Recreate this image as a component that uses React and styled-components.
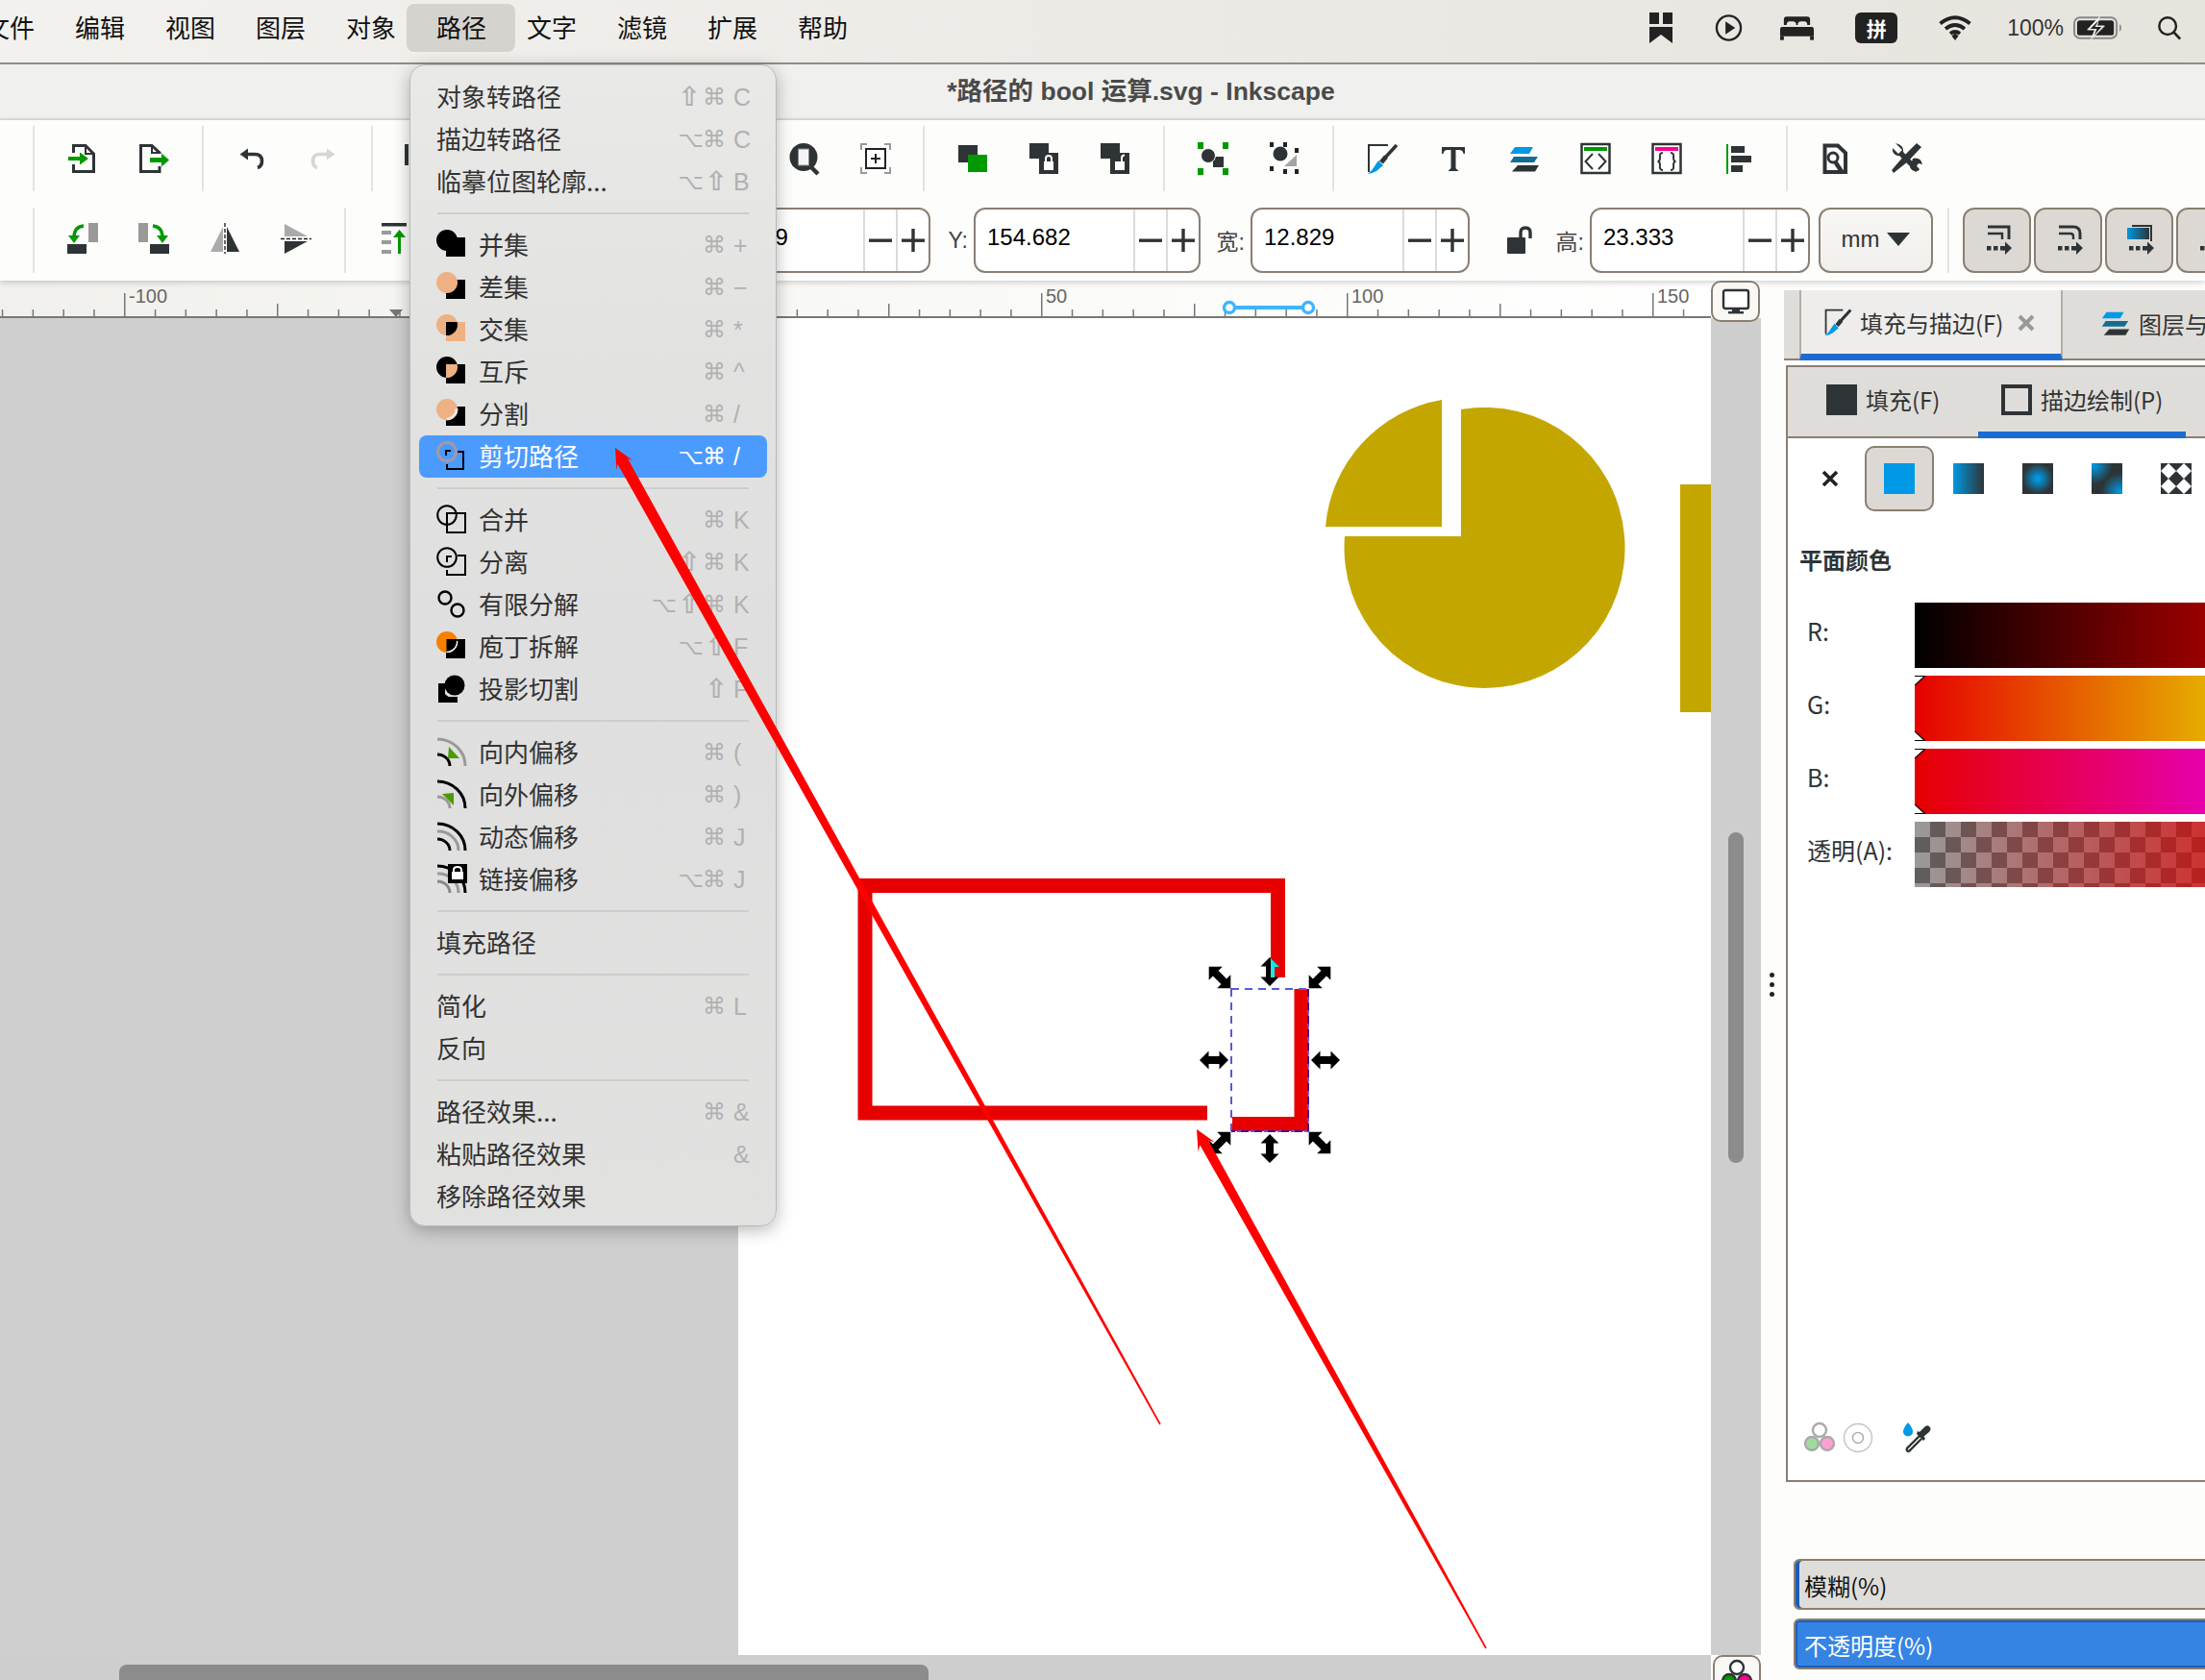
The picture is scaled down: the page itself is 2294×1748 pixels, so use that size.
import React from 'react';
import styled, { createGlobalStyle, css } from 'styled-components';

const DARK = '#2e3436';
const GREEN = '#009900';
const BLUE = '#0099e5';
const PINK = '#ff0090';
const PEACH = '#edb183';
const LINE = '#8a7f73';
const SANS = `"Liberation Sans", "Noto Sans CJK SC", sans-serif`;
const CJK = `"Noto Sans CJK SC", "Liberation Sans", sans-serif`;
const SYM = `"Liberation Sans", "DejaVu Sans", sans-serif`;

const Global = createGlobalStyle`
  html, body { margin: 0; padding: 0; background: #fff; }
  #root { width: 2294px; height: 1748px; overflow: hidden; }
`;

const Page = styled.div`
  position: relative; width: 2294px; height: 1748px; overflow: hidden;
  display: flex; flex-direction: column; font-family: ${CJK};
`;

/* ---------- menu bar ---------- */
const MenuBar = styled.div`
  flex: none; height: 65px; border-bottom: 2px solid #8f8d89; display: flex; align-items: flex-start;
  padding-left: 0; background: linear-gradient(90deg, #f2f1ee 0%, #ebe9e4 60%, #e7e4de 100%);
  position: relative; z-index: 1; isolation: isolate;
`;
const MenuItems = styled.div`display: flex; margin-left: -37px;`;
const MenuItem = styled.div`
  position: relative; width: 94px; height: 56px; line-height: 56px; text-align: center;
  font-size: 26px; color: #111;
  ${p => p.$active && css`
    &::before { content: ''; position: absolute; z-index: -1; left: -10px; right: -9px; top: 4px; bottom: 2px;
      background: #d4d3ce; border-radius: 8px; }
  `}
`;
const Tray = styled.div`margin-left: auto; display: flex; align-items: center; height: 58px; padding-right: 24px;`;
const TrayCell = styled.div`margin-left: ${p => p.$m}px; display: flex; align-items: center;`;
const ImeBox = styled.div`
  width: 44px; height: 32px; border-radius: 6px; background: #222; color: #fff; font-size: 21px; font-weight: 700;
  display: flex; align-items: center; justify-content: center;
`;
const Percent = styled.span`font: 23px ${SANS}; color: #333;`;

/* ---------- title ---------- */
const TitleBar = styled.div`
  flex: none; box-sizing: border-box; height: 58px; padding-bottom: 5px; border-bottom: 2px solid #dcdcda; background: #f0f0ee; display: flex; align-items: center;
  justify-content: center; padding-left: 80px; font: 700 26.5px ${SANS}; color: #4a4a4a;
`;

/* ---------- toolbar ---------- */
const Toolbar = styled.div`
  flex: none; height: 167px; background: #fdfdfb; box-shadow: 0 2px 6px rgba(0,0,0,.18); position: relative; z-index: 1;
  display: flex; flex-direction: column;
`;
const ToolRow = styled.div`
  flex: none; box-sizing: border-box; display: flex; align-items: center; height: ${p => p.$h}px; padding-left: 34px;
  padding-bottom: ${p => p.$bottom || 0}px;
`;
const Sep = styled.div`flex: none; width: 2px; height: 68px; background: #e4e3df; margin-left: ${p => p.$m || 0}px;`;
const Group = styled.div`
  flex: none; width: ${p => p.$w}px; display: flex; align-items: center;
  justify-content: ${p => p.$j || 'center'}; padding: ${p => p.$pad || '0'}; box-sizing: border-box;
`;
const Slot = styled.div`
  flex: none; box-sizing: border-box; width: ${p => p.$w || 74}px; height: 68px; display: flex; align-items: center; justify-content: center;
  margin-left: ${p => p.$m || 0}px; padding-bottom: ${p => p.$up || 0}px;
`;
const SlotPair = styled.span`display: flex;`;
const Spin = styled.div`
  flex: none; box-sizing: border-box; width: ${p => p.$w}px; height: 68px; margin-left: ${p => p.$m || 0}px;
  display: flex; border: 2px solid ${LINE}; border-radius: 12px; background: #fff; overflow: hidden;
`;
const SpinValue = styled.div`flex: 1; padding: 0 0 6px 12px; display: flex; align-items: center; font: 24px ${SANS}; color: #000;`;
const SpinCell = styled.div`
  flex: none; width: 34px; border-left: 2px solid #dddbd7; box-sizing: border-box;
  display: flex; align-items: center; justify-content: center;
`;
const FieldLabel = styled.div`
  flex: none; width: ${p => p.$w}px; box-sizing: border-box; padding-right: 6px; text-align: right;
  font: 23px ${SANS}; color: #444;
`;
const LockWrap = styled.span`display: flex; margin-left: 20px;`;
const UnitButton = styled.div`
  flex: none; box-sizing: border-box; width: 119px; height: 68px; margin-left: 9px; border: 2px solid ${LINE}; border-radius: 12px;
  background: linear-gradient(#f8f7f4, #f0efeb); display: flex; align-items: center; justify-content: center; gap: 8px;
  font: 24px ${SANS}; color: #333; padding-bottom: 2px;
`;
const CmdButtons = styled.div`display: flex; gap: 3px; margin-left: 14px;`;
const CmdButton = styled.div`
  flex: none; box-sizing: border-box; width: 71px; height: 68px; border: 2px solid ${LINE}; border-radius: 12px;
  background: #dcd9d4; display: flex; align-items: center; justify-content: center;
`;

/* ---------- main area ---------- */
const Main = styled.div`flex: 1; min-height: 0; display: flex;`;
const Work = styled.div`flex: none; width: 1832px; display: flex; flex-direction: column;`;
const RulerRow = styled.div`flex: none; height: 39px; display: flex;`;
const RulerStrip = styled.div`
  flex: none; width: 1780px; height: 39px; background: linear-gradient(90deg, #f1f0ec 0%, #f8f8f5 45%, #ffffff 100%);
`;
const ScreenButton = styled.div`
  flex: none; box-sizing: border-box; width: 51px; height: 43px; border: 2px solid ${LINE}; border-radius: 10px; background: #f9f8f5;
  display: flex; align-items: center; justify-content: center; position: relative; z-index: 1;
`;
const CanvasRow = styled.div`flex: 1; min-height: 0; display: flex;`;
const Desk = styled.div`flex: none; width: 768px; background: #cfcfcf;`;
const Sheet = styled.div`flex: none; width: 1012px; background: #fff; position: relative;`;
const Drawing = styled.svg`position: absolute; left: 0; top: 0;`;
const VTrack = styled.div`flex: none; width: 52px; background: #cecece; padding-top: 535px; box-sizing: border-box;`;
const VThumb = styled.div`width: 16px; height: 344px; margin-left: 18px; border-radius: 8px; background: #8c8c8c;`;
const HRow = styled.div`flex: none; height: 26px; display: flex;`;
const HTrack = styled.div`flex: none; width: 1780px; background: #cecece; padding: 10px 0 0 124px; box-sizing: border-box;`;
const HThumb = styled.div`width: 842px; height: 16px; border-radius: 8px 8px 0 0; background: #8c8c8c;`;
const CornerButton = styled.div`
  flex: none; box-sizing: border-box; width: 50px; height: 30px; margin: 0 2px; border: 2px solid ${LINE}; border-bottom: 0;
  border-radius: 10px 10px 0 0; background: #f9f8f5; display: flex; justify-content: center; align-items: flex-start; padding-top: 2px;
`;

/* ---------- right panel ---------- */
const Panel = styled.div`
  flex: none; width: 462px; background: #fdfdfb; position: relative; overflow: hidden; padding-top: 10px; box-sizing: border-box;
  display: flex; flex-direction: column;
`;
const Grip = styled.div`position: absolute; left: 9px; top: 720px; display: flex; flex-direction: column; gap: 5px;`;
const GripDot = styled.span`width: 5px; height: 5px; border-radius: 50%; background: #222;`;
const DockTabs = styled.div`
  flex: none; height: 71px; margin-left: 24px; background: #dfddd9; border-bottom: 2px solid ${LINE}; display: flex; padding-left: 16px;
  font-size: 24px; color: #333;
`;
const DockTab = styled.div`
  flex: none; box-sizing: border-box; display: flex; align-items: center; height: 73px; margin-bottom: -2px;
  width: ${p => p.$w}px; padding-left: ${p => p.$pad}px; gap: 7px; padding-bottom: ${p => p.$on ? 0 : 5}px;
  ${p => p.$on && css`
    background: #eeedeb; border-left: 2px solid #b5ada4; border-right: 2px solid #b5ada4;
    border-bottom: 7px solid #1c6bd0;
  `}
`;
const CloseMark = styled.span`margin-left: 7px; margin-top: 2px; display: flex;`;
const Notebook = styled.div`
  flex: none; box-sizing: border-box; height: 1162px; margin: 5px 0 0 26px; border: 2px solid ${LINE}; border-right: 0;
  display: flex; flex-direction: column; background: #fff;
`;
const NbTabs = styled.div`
  flex: none; box-sizing: border-box; height: 74px; background: #dfddd9; border-bottom: 2px solid ${LINE}; display: flex;
  font-size: 24px; color: #333;
`;
const NbTab = styled.div`
  flex: none; box-sizing: border-box; width: ${p => p.$w}px; height: 74px; margin-bottom: -2px; display: flex; align-items: center; gap: 9px; padding-left: ${p => p.$pad}px;
  padding-bottom: ${p => p.$on ? 0 : 7}px;
  ${p => p.$on && css`border-bottom: 7px solid #1c6bd0;`}
`;
const Swatch = styled.span`
  flex: none; box-sizing: border-box; width: 32px; height: 32px; background: ${p => p.$hollow ? 'transparent' : DARK};
  border: ${p => p.$hollow ? `4px solid ${DARK}` : '0'};
`;
const PaintRow = styled.div`flex: none; display: flex; height: 68px; margin-top: 8px; padding-left: 8px;`;
const PaintSlot = styled.div`
  flex: none; box-sizing: border-box; width: 72px; display: flex; align-items: center; justify-content: center;
  ${p => p.$on && css`background: #dcd9d4; border: 2px solid ${LINE}; border-radius: 10px;`}
`;
const PaintSwatch = styled.span`flex: none; width: 32px; height: 32px; background: ${p => p.$bg};`;
const Heading = styled.div`flex: none; height: 30px; line-height: 30px; margin: 35px 0 30px 12px; font-size: 24px; font-weight: 700; color: ${DARK};`;
const Channels = styled.div`flex: none; display: flex; flex-direction: column; gap: 8px;`;
const Channel = styled.div`flex: none; height: 68px; display: flex; align-items: center;`;
const ChannelLabel = styled.div`flex: none; box-sizing: border-box; width: 132px; padding: 0 0 10px 20px; font-size: 25px; color: ${DARK}; font-family: ${CJK};`;
const ChannelBar = styled.div`
  flex: none; position: relative; width: 448px; height: 100%; background: ${p => p.$bg};
  ${p => p.$checker && css`background-size: 100% 100%, 32px 32px;`}
`;
const ThumbMarks = styled.svg`position: absolute; left: 0; top: 0;`;
const ToolFoot = styled.div`margin-top: auto; flex: none; height: 30px; padding: 0 0 29px 16px; display: flex; align-items: center;`;
const FootIcon = styled.span`display: flex; margin-left: ${p => p.$m || 0}px;`;
const Levels = styled.div`flex: none; margin: 80px -20px 0 34px; display: flex; flex-direction: column; gap: 9px;`;
const Level = styled.div`
  box-sizing: border-box; height: 53px; border: 2px solid ${LINE}; border-radius: 6px 0 0 6px; display: flex; align-items: center;
  font-size: 24px; padding: 2px 0 0 9px;
  ${p => p.$on
    ? css`background: #3584e4; color: #fff; box-shadow: inset 0 0 0 2px #1c5fb8;`
    : css`background: #dfddd9; color: #111; box-shadow: inset 4px 0 0 #1c5fb8;`}
`;

/* ---------- path menu ---------- */
const Menu = styled.div`
  position: absolute; left: 426px; top: 67px; width: 382px; height: 1209px; box-sizing: border-box; padding-top: 11px; z-index: 5;
  border-radius: 16px; border: 1px solid #b9b9b8; background: linear-gradient(180deg, #e9e9e7 0%, #e2e2e1 25%, #dfdfdf 50%, #e1e1e0 100%);
  box-shadow: 0 4px 18px rgba(0,0,0,.28);
`;
const Row = styled.div`
  height: 44px; margin: 0 9px; padding: 0 18px; box-sizing: border-box; display: flex; align-items: center; border-radius: 8px;
  font-size: 26px; color: ${p => p.$hot ? '#fff' : '#333'}; background: ${p => p.$hot ? '#4b9bff' : 'transparent'};
`;
const RowIcon = styled.span`flex: none; width: 32px; height: 32px; margin-right: 12px; display: flex;`;
const RowLabel = styled.span`flex: 1; white-space: nowrap; padding-bottom: 4px;`;
const Shortcut = styled.span`flex: none; display: flex; align-items: center; color: ${p => p.$hot ? '#fff' : '#b1b1b1'};`;
const Mods = styled.span`display: flex; margin-right: 8px;`;
const Mod = styled.span`
  flex: none; width: 28px; text-align: right; line-height: 30px;
  font-family: "DejaVu Sans", sans-serif; font-size: 24px;
  ${p => p.$kind === '⇧' && css`font-size: 28px; font-weight: 700; transform: translateX(2px);`}
  ${p => p.$kind === '⌥' && css`font-size: 23px; transform: translateX(5px);`}
`;
const Key = styled.span`flex: none; width: 17px; font: 25px ${SYM}; white-space: nowrap;`;
const MenuSep = styled.div`height: 2px; margin: 10px 28px; background: #cdcdcc;`;
const Overlay = styled.svg`position: absolute; left: 0; top: 0; z-index: 9; pointer-events: none;`;

/* ---------- icons ---------- */
const Ic = ({ s = 36, v = 36, children }) => <svg width={s} height={s} viewBox={`0 0 ${v} ${v}`}>{children}</svg>;

const ImportIc = () => <Ic><path d="M8.5 12V4.5H21L29.5 13V31.5H8.5V24" fill="none" stroke={DARK} strokeWidth="3"/><path d="M21 3.5V13H30" fill="none" stroke={DARK} strokeWidth="2"/><path d="M3 16H15V11.5L24 18L15 24.5V20H3Z" fill={GREEN}/></Ic>;
const ExportIc = () => <Ic><path d="M24 13V12L16 4.5H4.5V31.5H24V26" fill="none" stroke={DARK} strokeWidth="3"/><path d="M16 3.5V12H25" fill="none" stroke={DARK} strokeWidth="2"/><path d="M14 17H26V12.5L34 19.5L26 26.5V22H14Z" fill={GREEN}/></Ic>;
const UndoIc = ({ c = DARK, flip }) => <Ic><g transform={flip ? 'translate(36 0) scale(-1 1)' : ''}><path d="M14 7.5V19.5L5.5 13.5Z" fill={c}/><path d="M12 13.5H21Q28.5 13.5 28.5 20.5Q28.5 26 24 27.5" fill="none" stroke={c} strokeWidth="3.6"/></g></Ic>;
const ZoomIc = () => <Ic><circle cx="17" cy="16.5" r="14.5" fill={DARK}/><rect x="11.5" y="8" width="11" height="17" fill="#f5f5f5" stroke="#888" strokeWidth="1"/><path d="M24 26L32 34" stroke={DARK} strokeWidth="4.4"/></Ic>;
const FitIc = () => <Ic><path d="M3 9V3H9M27 3H33V9M33 27V33H27M9 33H3V27" fill="none" stroke="#999" strokeWidth="2"/><rect x="8" y="8" width="20" height="20" fill="#fff" stroke="#222" strokeWidth="2"/><path d="M18 13V23M13 18H23" stroke="#222" strokeWidth="2"/></Ic>;
const RaiseIc = () => <Ic><rect x="3" y="4" width="20" height="18" fill={DARK}/><rect x="13" y="14" width="20" height="18" fill={GREEN}/></Ic>;
const LockIc = ({ open }) => <Ic><rect x="3" y="2" width="20" height="16" fill={DARK}/><rect x="13" y="12" width="20" height="22" fill={DARK}/><rect x="18" y="21" width="10" height="9" fill="#fff"/>{open ? <path d="M25 21V17Q25 14.5 28 14.5" fill="none" stroke="#fff" strokeWidth="2"/> : <path d="M20 21V18Q20 15 23 15Q26 15 26 18V21" fill="none" stroke="#fff" strokeWidth="2"/>}</Ic>;
const GroupIc = () => <Ic><g fill={GREEN}><rect x="2" y="1" width="6" height="7"/><rect x="28" y="1" width="6" height="7"/><rect x="2" y="28" width="6" height="7"/><rect x="28" y="28" width="6" height="7"/></g><rect x="18" y="16" width="11" height="11" fill={DARK}/><circle cx="13" cy="15" r="7.5" fill={DARK} stroke="#fdfdfb" strokeWidth="1"/></Ic>;
const UngroupIc = () => <Ic><g fill="#222"><rect x="3" y="1" width="4" height="5"/><rect x="17" y="1" width="4" height="5"/><rect x="29" y="7" width="4" height="5"/><rect x="3" y="26" width="4" height="5"/><rect x="17" y="29" width="4" height="5"/><rect x="29" y="29" width="4" height="5"/></g><path d="M31 14V26H18Z" fill="#a4a4a4"/><circle cx="14" cy="13" r="7.5" fill={DARK}/></Ic>;
const BrushIc = ({ s = 36 }) => <Ic s={s}><path d="M4 32V4H24" fill="none" stroke={DARK} strokeWidth="2"/><path d="M33 4L21 17" stroke={DARK} strokeWidth="3.4"/><path d="M22 16L17 22" stroke={DARK} strokeWidth="5"/><path d="M14 20L19 25L12 31Q7 34 3 34Q8 30 10 26Z" fill={BLUE}/></Ic>;
const TextIc = () => <Ic><path d="M6 6H30V13H28.5Q28 9 24 9H20.5V28L23.5 31H12.5L15.5 28V9H12Q8 9 7.5 13H6Z" fill={DARK}/></Ic>;
const LayersIc = ({ s = 36 }) => <Ic s={s}><path d="M8 6H27L23 13H3Z" fill={BLUE}/><path d="M7 16H32L28 22H3Z" fill="#146d92"/><path d="M11 25H33L29 31.5H5Z" fill={DARK}/></Ic>;
const XmlIc = () => <Ic><rect x="3.5" y="3" width="29" height="30" fill="#fff" stroke={DARK} strokeWidth="2.5"/><rect x="6" y="6" width="24" height="4" fill={GREEN}/><path d="M15 13L7.5 21L15 29M21 13L28.5 21L21 29" fill="none" stroke={DARK} strokeWidth="2"/></Ic>;
const CssIc = () => <Ic><rect x="3.5" y="3" width="29" height="30" fill="#fff" stroke={DARK} strokeWidth="2.5"/><rect x="6" y="6" width="24" height="4" fill={PINK}/><path d="M14 12Q10 12 11 17Q11 21 8.5 21Q11 21 11 25Q10 30 14 30M22 12Q26 12 25 17Q25 21 27.5 21Q25 21 25 25Q26 30 22 30" fill="none" stroke={DARK} strokeWidth="2"/></Ic>;
const AlignIc = () => <Ic><rect x="6" y="3" width="2" height="31" fill={GREEN}/><rect x="11" y="5" width="14" height="7" fill={DARK}/><rect x="11" y="15" width="21" height="7" fill={DARK}/><rect x="11" y="25" width="12" height="7" fill={DARK}/></Ic>;
const DocToolIc = () => <Ic><path d="M6.5 32V4.5H20L28 12V32Z" fill="none" stroke={DARK} strokeWidth="4"/><circle cx="15" cy="17" r="5" fill="none" stroke={DARK} strokeWidth="3"/><path d="M17 21L25 33" stroke={DARK} strokeWidth="4.5"/></Ic>;
const ToolsIc = () => <Ic><path d="M6 2L13 9L9 13L3 7Q2 13 8 15L10 15L27 32L31 29L14 11Q15 4 6 2Z" fill={DARK}/><path d="M28 2L33 6L19 21L4 33L2 30L15 15Z" fill={DARK}/><path d="M24 18Q32 16 34 24L30 23L27 27L31 30Q24 33 21 27Z" fill={DARK}/></Ic>;
const MoveIc = ({ mirror }) => <Ic><g transform={mirror ? 'translate(36 0) scale(-1 1)' : ''}><rect x="24" y="2" width="10" height="20" fill="#999"/><rect x="2" y="24" width="20" height="10" fill={DARK}/><path d="M19 5Q9 6 9 17" fill="none" stroke={GREEN} strokeWidth="3.4"/><path d="M3 15H15L9 23Z" fill={GREEN}/></g></Ic>;
const FlipHIc = () => <Ic><path d="M16 6V32H3Z" fill="#aaa"/><path d="M20 6V32H33Z" fill={DARK}/><path d="M18 2V34" stroke="#222" strokeWidth="1.4" strokeDasharray="4 2"/></Ic>;
const FlipVIc = () => <Ic><path d="M6 3L30 16H6Z" fill="#aaa"/><path d="M6 21L30 21L6 34Z" fill={DARK}/><path d="M2 18.5H34" stroke="#222" strokeWidth="1.6" strokeDasharray="4 2"/></Ic>;
const AlignTopIc = () => <Ic><rect x="6" y="2" width="26" height="3.5" fill={DARK}/><rect x="6" y="10" width="10" height="4" fill="#999"/><rect x="6" y="20" width="10" height="4" fill="#999"/><rect x="6" y="30" width="10" height="4" fill="#999"/><rect x="23" y="14" width="3" height="20" fill={GREEN}/><path d="M18 17L24.5 9L31 17Z" fill={GREEN}/></Ic>;
const CutBarIc = () => <svg width="4" height="22" style={{ display: 'block' }}><rect width="4" height="22" fill={DARK}/></svg>;
const MinusIc = () => <svg width="26" height="26" viewBox="0 0 26 26"><rect x="1" y="11.5" width="24" height="3.4" fill={DARK}/></svg>;
const PlusIc = () => <svg width="26" height="26" viewBox="0 0 26 26"><rect x="1" y="11.5" width="24" height="3.4" fill={DARK}/><rect x="11.3" y="1" width="3.4" height="24" fill={DARK}/></svg>;
const OpenLockIc = () => <svg width="28" height="30" viewBox="0 0 28 30"><rect x="1" y="12" width="19" height="17" rx="1" fill={DARK}/><path d="M15 12V7Q15 2 20 2Q25 2 25 7V13" fill="none" stroke={DARK} strokeWidth="3.4"/></svg>;
const CmdIc = ({ round, grad, blue }) => (
  <Ic>
    {grad && <defs><linearGradient id="cg"><stop offset="0" stopColor={BLUE}/><stop offset="1" stopColor={DARK}/></linearGradient></defs>}
    {grad ? <><rect x="5" y="5" width="23" height="12" fill="url(#cg)"/><path d="M10 3H30V19" fill="none" stroke={DARK} strokeWidth="2"/></>
      : blue ? <path d="M14 4L22 10L14 16" fill="none" stroke={BLUE} strokeWidth="2"/>
      : round ? <><path d="M8 4H23Q30 4 30 11V17" fill="none" stroke={DARK} strokeWidth="3"/><path d="M8 11H20Q23 11 23 14V17" fill="none" stroke={DARK} strokeWidth="2.4"/></>
      : <><path d="M8 4H30V17" fill="none" stroke={DARK} strokeWidth="3"/><path d="M8 11H23V17" fill="none" stroke={DARK} strokeWidth="2.4"/></>}
    <g fill={DARK}><rect x="7" y="24" width="4.5" height="4.5"/><rect x="14" y="24" width="4.5" height="4.5"/><rect x="21" y="24" width="4" height="4.5"/><path d="M24 24H26V19.5L33 26L26 33V28.5H24Z"/></g>
  </Ic>
);
const ScreenIc = () => <svg width="32" height="32" viewBox="0 0 32 32"><rect x="3" y="4" width="26" height="19" rx="2" fill="#fff" stroke={DARK} strokeWidth="2.4"/><rect x="12" y="23" width="8" height="3" fill={DARK}/><rect x="8" y="26" width="16" height="2.4" fill={DARK}/></svg>;
const ColorsIc = ({ soft }) => (
  <svg width="34" height="34" viewBox="0 0 34 34" style={{ display: 'block' }}>
    <circle cx="17" cy="9" r="7" fill="#fff" stroke={soft ? '#aaa' : DARK} strokeWidth="2.4"/>
    <circle cx="9" cy="23" r="7" fill={soft ? '#9edc9e' : GREEN} stroke={soft ? '#aaa' : DARK} strokeWidth="2.4"/>
    <circle cx="25" cy="23" r="7" fill={soft ? '#ff9fd2' : PINK} stroke={soft ? '#aaa' : DARK} strokeWidth="2.4"/>
  </svg>
);
const RingIc = () => <svg width="32" height="32" viewBox="0 0 32 32"><circle cx="16" cy="16" r="14.5" fill="none" stroke="#c4c4c4" strokeWidth="1.4"/><circle cx="16" cy="16" r="5.5" fill="none" stroke="#aaa" strokeWidth="1.4"/></svg>;
const DropperIc = () => <svg width="32" height="32" viewBox="0 0 32 32"><path d="M6 0Q11 6 11 9.5A5 5 0 0 1 1 9.5Q1 6 6 0Z" fill={BLUE}/><path d="M18 14L5 27Q4 30 7 30L20 17" fill="none" stroke={DARK} strokeWidth="2.4"/><path d="M15 12L22 19L24 17L22.5 14.5L28 10Q31 6 28 4Q25 2 22 6L18 10L16 9Z" fill={DARK}/></svg>;
const XIc = ({ c = '#222', s = 20, w = 3.6 }) => <svg width={s} height={s} viewBox="0 0 20 20"><path d="M3 3L17 17M17 3L3 17" stroke={c} strokeWidth={w}/></svg>;
const CaretIc = () => <svg width="24" height="16" viewBox="0 0 24 16"><path d="M0 1H24L12 15Z" fill={DARK}/></svg>;
const PatternIc = () => <svg width="32" height="32" viewBox="0 0 32 32" style={{ display: 'block' }}><rect width="32" height="32" fill="#fff"/><path d="M0 0H8L0 8ZM16 0H24L16 8L8 0ZM32 0V8L24 0ZM16 8L24 16L16 24L8 16ZM0 8L8 16L0 24ZM32 8V24L24 16ZM0 24L8 32H0ZM16 24L24 32H8ZM32 24V32H24Z" fill={DARK}/></svg>;

/* tray */
const BookmarkIc = () => <svg width="24" height="32" viewBox="0 0 24 32" style={{ display: 'block' }}><path d="M0 0H10V12H0ZM14 0H24V12H14ZM0 15H24V32L12 23L0 32Z" fill="#222"/></svg>;
const PlayIc = () => <svg width="29" height="30" viewBox="0 0 30 30"><circle cx="15" cy="15" r="13" fill="none" stroke="#222" strokeWidth="2.4"/><path d="M11.5 8L22 15L11.5 22Z" fill="#222"/></svg>;
const BedIc = () => <svg width="37" height="26" viewBox="0 0 38 26"><path d="M5 10V4Q5 1 8 1H30Q33 1 33 4V10H30Q30 6 27 6H23Q21 6 20 8V10H18V8Q17 6 15 6H11Q8 6 8 10Z" fill="#222"/><path d="M3 12H35Q37 12 37 15V22H1V15Q1 12 3 12Z" fill="#222"/><rect x="1" y="22" width="4" height="4" fill="#222"/><rect x="33" y="22" width="4" height="4" fill="#222"/></svg>;
const WifiIc = () => <svg width="36" height="28" viewBox="0 0 36 28"><path d="M2.5 9.5Q18 -3 33.5 9.5M8 15Q18 7 28 15M13 20Q18 16 23 20" fill="none" stroke="#222" strokeWidth="3.8"/><path d="M14.5 22.5L18 19.5L21.5 22.5L18 27Z" fill="#222"/></svg>;
const BatteryIc = () => <svg width="51" height="26" viewBox="0 0 52 26"><rect x="1" y="2" width="45" height="22" rx="6" fill="none" stroke="#888" strokeWidth="2"/><rect x="4" y="5" width="39" height="16" rx="3" fill="#222"/><path d="M49 9Q51 10 51 13Q51 16 49 17Z" fill="#888"/><path d="M28 1L15 15H23L19 25L33 11H25Z" fill="#fff" stroke="#e9e6e0" strokeWidth="1"/><path d="M27 5L18 14H25L22 21L30 12H23Z" fill="#222"/></svg>;
const SearchIc = () => <svg width="26" height="28" viewBox="0 0 28 28"><circle cx="12" cy="12" r="9.5" fill="none" stroke="#222" strokeWidth="2.6"/><path d="M19 19L26 26.5" stroke="#222" strokeWidth="3"/></svg>;

/* menu icons */
const MI = ({ children }) => <svg width="32" height="32" viewBox="0 0 32 32">{children}</svg>;
const ci = { cx: 11, cy: 11, r: 11 };
const sq = { x: 10, y: 8, width: 20, height: 20 };
const OUT = 'M1 2A29 28 0 0 1 30 30';
const MID = 'M1 10A21 20 0 0 1 23 30';
const INN = 'M1 18A13 12 0 0 1 14 30';
const menuIcons = {
  union: <MI><circle {...ci} fill="#000"/><rect {...sq} fill="#000"/></MI>,
  diff: <MI><rect {...sq} fill="#000"/><circle {...ci} fill={PEACH}/></MI>,
  inter: <MI><circle {...ci} fill={PEACH}/><rect {...sq} fill={PEACH}/><path d="M10 8H21.6A11 11 0 0 1 10 21.95Z" fill="#000"/></MI>,
  xor: <MI><circle {...ci} fill="#000"/><rect {...sq} fill="#000"/><path d="M10 8H21.6A11 11 0 0 1 10 21.95Z" fill={PEACH}/></MI>,
  cut: <MI><rect {...sq} fill="#000"/><circle {...ci} fill={PEACH}/><path d="M21 10A10.5 10.5 0 0 1 10.5 21" fill="none" stroke="#e6e6e5" strokeWidth="3"/></MI>,
  clip: <MI><path d="M15 11H28V29H11V24" fill="none" stroke="#000" strokeWidth="2"/><circle cx="11" cy="11" r="9.5" fill="#4b9bff" stroke="#a897a2" strokeWidth="3"/><path d="M10 15V10H15" fill="none" stroke="#000" strokeWidth="2"/></MI>,
  merge: <MI><rect x="11" y="9" width="19" height="20" fill="none" stroke="#000" strokeWidth="2"/><circle cx="11" cy="11" r="9.8" fill="none" stroke="#000" strokeWidth="2"/></MI>,
  sep: <MI><path d="M22 9H30V29H11V24" fill="none" stroke="#000" strokeWidth="2"/><circle cx="11" cy="11" r="9.8" fill="none" stroke="#000" strokeWidth="2"/><path d="M11 16V10H16" fill="none" stroke="#000" strokeWidth="2"/></MI>,
  frag: <MI><circle cx="9" cy="9" r="6.5" fill="none" stroke="#000" strokeWidth="2.4"/><circle cx="22" cy="22" r="6.5" fill="none" stroke="#000" strokeWidth="2.4"/></MI>,
  slice: <MI><rect {...sq} fill="#000"/><circle {...ci} fill="#f77f00"/><path d="M10.5 8H21.5A11 11 0 0 1 10.5 21.5Z" fill="#000"/><path d="M21.6 10A11 11 0 0 1 10.5 21.5" fill="none" stroke="#f4f4f4" strokeWidth="1.5"/></MI>,
  proj: <MI><rect x="2" y="10" width="20" height="20" fill="#000"/><circle cx="19" cy="12" r="13.5" fill="#e0e0e0"/><path d="M2 10H9V24H22V30H2Z" fill="#000"/><circle cx="19" cy="12" r="10.5" fill="#000"/></MI>,
  inset: <MI><path d={OUT} fill="none" stroke="#999" strokeWidth="3"/><path d={INN} fill="none" stroke="#000" strokeWidth="3"/><path d="M13 10L24 22H12Z" fill="#4e9a06"/></MI>,
  outset: <MI><path d={INN} fill="none" stroke="#999" strokeWidth="3"/><path d={OUT} fill="none" stroke="#000" strokeWidth="3"/><path d="M6 15L18 14V27Z" fill="#4e9a06"/></MI>,
  dyn: <MI><path d={OUT} fill="none" stroke="#000" strokeWidth="3"/><path d={MID} fill="none" stroke="#999" strokeWidth="3"/><path d={INN} fill="none" stroke="#000" strokeWidth="3"/></MI>,
  link: <MI><path d={OUT} fill="none" stroke="#000" strokeWidth="3"/><path d={MID} fill="none" stroke="#999" strokeWidth="3"/><path d={INN} fill="none" stroke="#888" strokeWidth="3"/><rect x="12" y="0" width="20" height="20" fill="#000"/><rect x="16" y="8" width="12" height="8" fill="#fff"/><path d="M18 9V6Q18 3 22 3Q26 3 26 6V9" fill="none" stroke="#fff" strokeWidth="2"/></MI>,
};

const menuData = [
  [['对象转路径', null, '⇧⌘', 'C'], ['描边转路径', null, '⌥⌘', 'C'], ['临摹位图轮廓...', null, '⌥⇧', 'B']],
  [['并集', 'union', '⌘', '+'], ['差集', 'diff', '⌘', '−'], ['交集', 'inter', '⌘', '*'], ['互斥', 'xor', '⌘', '^'], ['分割', 'cut', '⌘', '/'], ['剪切路径', 'clip', '⌥⌘', '/', true]],
  [['合并', 'merge', '⌘', 'K'], ['分离', 'sep', '⇧⌘', 'K'], ['有限分解', 'frag', '⌥⇧⌘', 'K'], ['庖丁拆解', 'slice', '⌥⇧', 'F'], ['投影切割', 'proj', '⇧', 'F']],
  [['向内偏移', 'inset', '⌘', '('], ['向外偏移', 'outset', '⌘', ')'], ['动态偏移', 'dyn', '⌘', 'J'], ['链接偏移', 'link', '⌥⌘', 'J']],
  [['填充路径']],
  [['简化', null, '⌘', 'L'], ['反向']],
  [['路径效果...', null, '⌘', '&'], ['粘贴路径效果', null, '', '&'], ['移除路径效果']],
];

const PathMenu = () => (
  <Menu>
    {menuData.map((sec, i) => (
      <React.Fragment key={i}>
        {i > 0 && <MenuSep />}
        {sec.map(([label, icon, mods, key, hot]) => (
          <Row key={label} $hot={hot}>
            {icon && <RowIcon>{menuIcons[icon]}</RowIcon>}
            <RowLabel>{label}</RowLabel>
            {key && (
              <Shortcut $hot={hot}>
                <Mods>{[...mods].map(c => <Mod key={c} $kind={c}>{c}</Mod>)}</Mods>
                <Key>{key}</Key>
              </Shortcut>
            )}
          </Row>
        ))}
      </React.Fragment>
    ))}
  </Menu>
);

/* ruler */
const Ruler = () => {
  const ticks = [];
  for (let k = -34; k <= 22; k++) {
    const x = 1083 + 31.8 * k;
    const h = k % 10 === 0 ? 25 : k % 5 === 0 ? 14 : 8;
    ticks.push(<rect key={k} x={x} y={38 - h} width="1.5" height={h} fill="#777"/>);
    if (k % 10 === 0) ticks.push(<text key={`t${k}`} x={x + 5} y="23" fontFamily="Liberation Sans" fontSize="20" fill="#666">{50 + k * 5}</text>);
  }
  return (
    <svg width="1780" height="39" viewBox="0 0 1780 39" style={{ display: 'block' }}>
      {ticks}
      <rect x="0" y="37" width="1780" height="2" fill="#777"/>
      <path d="M405 30H419L412 38Z" fill="#777"/>
      <path d="M1279 28H1361" stroke="#3db5ff" strokeWidth="4"/>
      <circle cx="1279" cy="28" r="5.5" fill="#fff" stroke="#3db5ff" strokeWidth="3.4"/>
      <circle cx="1361" cy="28" r="5.5" fill="#fff" stroke="#3db5ff" strokeWidth="3.4"/>
    </svg>
  );
};

/* drawing on the page */
const Handle = ({ x, y, rot = 0, long }) => {
  const L = long ? 16 : 15;
  const H = long ? 10 : 9.5;
  const pts = `0,${-L} ${H},${-L + H} 4,${-L + H} 4,${L - H} ${H},${L - H} 0,${L} ${-H},${L - H} -4,${L - H} -4,${-L + H} ${-H},${-L + H}`;
  return <polygon points={pts} fill="#000" transform={`translate(${x} ${y}) rotate(${rot})`}/>;
};

const CanvasArt = () => (
  <Drawing width="1012" height="1391" viewBox="768 331 1012 1391">
    <path d="M1500 416A146 146 0 0 0 1379 548H1500Z" fill="#c4a600"/>
    <path d="M1520 426A146 146 0 1 1 1399 558H1520Z" fill="#c4a600"/>
    <rect x="1748" y="504" width="32" height="237" fill="#c4a600"/>
    <path d="M1256 1158H900V921.5H1329.5V1017" fill="none" stroke="#e60000" strokeWidth="15"/>
    <path d="M1282 1169.5H1354V1029" fill="none" stroke="#e60000" strokeWidth="15"/>
    <rect x="1281" y="1029" width="80" height="148" fill="none" stroke="#5a5ada" strokeWidth="2" strokeDasharray="8 6"/>
    <path d="M1361 1029V1177H1281" fill="none" stroke="#4a0a90" strokeWidth="2" strokeDasharray="8 6"/>
    <Handle x={1321} y={1011}/>
    <Handle x={1321} y={1195}/>
    <Handle x={1263} y={1103} rot={90}/>
    <Handle x={1379} y={1103} rot={90}/>
    <Handle x={1269} y={1017} rot={-45} long/>
    <Handle x={1373} y={1017} rot={45} long/>
    <Handle x={1269} y={1189} rot={45} long/>
    <Handle x={1373} y={1189} rot={-45} long/>
    <path d="M1322 997L1331 1006H1326V1017H1322Z" fill="#19e6e6"/>
  </Drawing>
);

const arrowPath = ([tx, ty], [ex, ey], w) => {
  const d = Math.hypot(ex - tx, ey - ty);
  const ux = (ex - tx) / d, uy = (ey - ty) / d;
  const nx = -uy, ny = ux;
  const p = (a, b) => `${(tx + ux * a + nx * b).toFixed(1)},${(ty + uy * a + ny * b).toFixed(1)}`;
  return [p(0, 0), p(21, 10), p(16, w / 2), p(d, 0.8), p(d, -0.8), p(16, -w / 2), p(21, -10)].join(' ');
};

const Marks = () => (
  <ThumbMarks width="12" height="68" viewBox="0 0 12 68">
    <path d="M0 0H11L0 10Z" fill="#fff"/><path d="M0 10L11 0" stroke="#000" strokeWidth="1.2"/><path d="M0 .5H11" stroke="#000" strokeWidth="1"/>
    <path d="M0 68H11L0 58Z" fill="#fff"/><path d="M0 58L11 68" stroke="#000" strokeWidth="1.2"/><path d="M0 67.5H11" stroke="#000" strokeWidth="1"/>
  </ThumbMarks>
);

const App = () => (
  <Page>
    <Global />
    <MenuBar>
      <MenuItems>
        {['文件', '编辑', '视图', '图层', '对象', '路径', '文字', '滤镜', '扩展', '帮助'].map(m => (
          <MenuItem key={m} $active={m === '路径'}>{m}</MenuItem>
        ))}
      </MenuItems>
      <Tray>
        <TrayCell $m={0}><BookmarkIc /></TrayCell>
        <TrayCell $m={44}><PlayIc /></TrayCell>
        <TrayCell $m={38}><BedIc /></TrayCell>
        <TrayCell $m={42}><ImeBox>拼</ImeBox></TrayCell>
        <TrayCell $m={42}><WifiIc /></TrayCell>
        <TrayCell $m={36}><Percent>100%</Percent></TrayCell>
        <TrayCell $m={10}><BatteryIc /></TrayCell>
        <TrayCell $m={36}><SearchIc /></TrayCell>
      </Tray>
    </MenuBar>
    <TitleBar>*路径的 bool 运算.svg - Inkscape</TitleBar>
    <Toolbar>
      <ToolRow $h={83} $bottom={3}>
        <Sep />
        <Group $w={174}><Slot><ImportIc /></Slot><Slot><ExportIc /></Slot></Group>
        <Sep />
        <Group $w={174}><Slot><UndoIc /></Slot><Slot><UndoIc c="#d6d6d4" flip /></Slot></Group>
        <Sep />
        <Group $w={572} $j="space-between" $pad="0 12px 0 25px"><Slot $w={20} $up={8}><CutBarIc /></Slot><SlotPair><Slot><ZoomIc /></Slot><Slot><FitIc /></Slot></SlotPair></Group>
        <Sep />
        <Group $w={248}><Slot><RaiseIc /></Slot><Slot><LockIc /></Slot><Slot><LockIc open /></Slot></Group>
        <Sep />
        <Group $w={174}><Slot><GroupIc /></Slot><Slot><UngroupIc /></Slot></Group>
        <Sep />
        <Group $w={470}><Slot><BrushIc /></Slot><Slot><TextIc /></Slot><Slot><LayersIc /></Slot><Slot><XmlIc /></Slot><Slot><CssIc /></Slot><Slot><AlignIc /></Slot></Group>
        <Sep />
        <Group $w={200} $j="flex-start" $pad="0 0 0 13px"><Slot><DocToolIc /></Slot><Slot><ToolsIc /></Slot></Group>
      </ToolRow>
      <ToolRow $h={84}>
        <Sep />
        <Group $w={322}><Slot $up={4}><MoveIc /></Slot><Slot $up={4}><MoveIc mirror /></Slot><Slot $up={4}><FlipHIc /></Slot><Slot $up={4}><FlipVIc /></Slot></Group>
        <Sep />
        <Slot $m={12} $up={4}><AlignTopIc /></Slot>
        <Spin $w={249} $m={273}><SpinValue>131.289</SpinValue><SpinCell><MinusIc /></SpinCell><SpinCell><PlusIc /></SpinCell></Spin>
        <FieldLabel $w={45}>Y:</FieldLabel>
        <Spin $w={236}><SpinValue>154.682</SpinValue><SpinCell><MinusIc /></SpinCell><SpinCell><PlusIc /></SpinCell></Spin>
        <FieldLabel $w={52}>宽:</FieldLabel>
        <Spin $w={228}><SpinValue>12.829</SpinValue><SpinCell><MinusIc /></SpinCell><SpinCell><PlusIc /></SpinCell></Spin>
        <Slot $w={83}><LockWrap><OpenLockIc /></LockWrap></Slot>
        <FieldLabel $w={42}>高:</FieldLabel>
        <Spin $w={229}><SpinValue>23.333</SpinValue><SpinCell><MinusIc /></SpinCell><SpinCell><PlusIc /></SpinCell></Spin>
        <UnitButton>mm <CaretIc /></UnitButton>
        <Sep $m={15} />
        <CmdButtons>
          <CmdButton><CmdIc /></CmdButton>
          <CmdButton><CmdIc round /></CmdButton>
          <CmdButton><CmdIc grad /></CmdButton>
          <CmdButton><CmdIc blue /></CmdButton>
        </CmdButtons>
      </ToolRow>
    </Toolbar>
    <Main>
      <Work>
        <RulerRow>
          <RulerStrip><Ruler /></RulerStrip>
          <ScreenButton><ScreenIc /></ScreenButton>
        </RulerRow>
        <CanvasRow>
          <Desk />
          <Sheet><CanvasArt /></Sheet>
          <VTrack><VThumb /></VTrack>
        </CanvasRow>
        <HRow>
          <HTrack><HThumb /></HTrack>
          <CornerButton><ColorsIc /></CornerButton>
        </HRow>
      </Work>
      <Panel>
        <Grip><GripDot /><GripDot /><GripDot /></Grip>
        <DockTabs>
          <DockTab $on $w={274} $pad={22}><BrushIc s={32} />填充与描边(F)<CloseMark><XIc c="#999" s={20} w={4} /></CloseMark></DockTab>
          <DockTab $w={200} $pad={38}><LayersIc s={34} />图层与对象</DockTab>
        </DockTabs>
        <Notebook>
          <NbTabs>
            <NbTab $w={198} $pad={40}><Swatch />填充(F)</NbTab>
            <NbTab $on $w={216} $pad={24}><Swatch $hollow />描边绘制(P)</NbTab>
          </NbTabs>
          <PaintRow>
            <PaintSlot><XIc /></PaintSlot>
            <PaintSlot $on><PaintSwatch $bg={BLUE} /></PaintSlot>
            <PaintSlot><PaintSwatch $bg={`linear-gradient(90deg, ${BLUE}, ${DARK})`} /></PaintSlot>
            <PaintSlot><PaintSwatch $bg={`radial-gradient(closest-side at center, ${BLUE} 10%, ${DARK} 100%)`} /></PaintSlot>
            <PaintSlot><PaintSwatch $bg={`radial-gradient(circle at 8% 8%, ${BLUE} 0, transparent 46%), radial-gradient(circle at 92% 92%, ${BLUE} 0, transparent 46%), ${DARK}`} /></PaintSlot>
            <PaintSlot><PatternIc /></PaintSlot>
          </PaintRow>
          <Heading>平面颜色</Heading>
          <Channels>
            <Channel><ChannelLabel>R:</ChannelLabel><ChannelBar $bg="linear-gradient(90deg, #000, #e60000)" /></Channel>
            <Channel>
              <ChannelLabel>G:</ChannelLabel>
              <ChannelBar $bg="linear-gradient(90deg, #e60000, #e6ff00)"><Marks /></ChannelBar>
            </Channel>
            <Channel>
              <ChannelLabel>B:</ChannelLabel>
              <ChannelBar $bg="linear-gradient(90deg, #e60000, #e600ff)"><Marks /></ChannelBar>
            </Channel>
            <Channel>
              <ChannelLabel>透明(A):</ChannelLabel>
              <ChannelBar $checker $bg="linear-gradient(90deg, rgba(230,0,0,0), rgba(230,0,0,1)), repeating-conic-gradient(#5f5f5f 0 25%, #9a9a9a 0 50%)" />
            </Channel>
          </Channels>
          <ToolFoot>
            <FootIcon><ColorsIc soft /></FootIcon>
            <FootIcon $m={7}><RingIc /></FootIcon>
            <FootIcon $m={30}><DropperIc /></FootIcon>
          </ToolFoot>
        </Notebook>
        <Levels>
          <Level>模糊(%)</Level>
          <Level $on>不透明度(%)</Level>
        </Levels>
      </Panel>
    </Main>
    <PathMenu />
    <Overlay width="2294" height="1748" viewBox="0 0 2294 1748">
      <polygon points={arrowPath([640, 466], [1207, 1482], 12)} fill="#ff0000"/>
      <polygon points={arrowPath([1245, 1175], [1546, 1715], 10)} fill="#ff0000"/>
    </Overlay>
  </Page>
);

export default App;
